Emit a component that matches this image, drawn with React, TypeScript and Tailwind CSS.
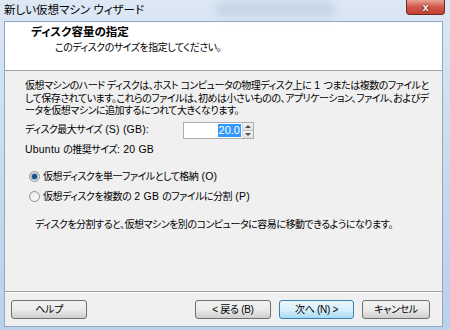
const jp = "font-['Liberation_Sans','Noto_Sans_CJK_JP',sans-serif] [font-feature-settings:'palt']";

// latin runs keep normal spacing, the kana is squeezed like Meiryo UI
function L({ children }: { children: React.ReactNode }) {
  return <span className="text-[10.5px] tracking-[0.2px]">{children}</span>;
}

function WinButton({ children, primary, className }: { children: React.ReactNode; primary?: boolean; className?: string }) {
  return (
    <button
      className={`h-[19px] rounded-[3px] border text-[10px] tracking-[-0.3px] leading-none text-black ${
        primary
          ? "border-[#3c7fb1] bg-gradient-to-b from-[#eaf6fd] via-[#d9f0fc] to-[#a7d9f5]"
          : "border-[#707070] bg-gradient-to-b from-[#f2f2f2] via-[#ebebeb] to-[#cfcfcf]"
      } ${className ?? ""}`}
    >
      {children}
    </button>
  );
}

function Radio({ checked, children }: { checked?: boolean; children: React.ReactNode }) {
  return (
    <div className="flex items-center h-[20px]">
      <div className="shrink-0 w-[11px] h-[11px] rounded-full border border-[#8e8f8f] bg-gradient-to-br from-[#e6e6e6] to-[#fbfbfb] flex items-center justify-center mr-[3px]">
        {checked && <div className="w-[5px] h-[5px] rounded-full bg-[#1a4c7c] shadow-[0_0_1px_1px_#6fa3d6]" />}
      </div>
      <span className="whitespace-nowrap">{children}</span>
    </div>
  );
}

export default function App() {
  return (
    <div className={`w-[450px] h-[330px] flex flex-col bg-gradient-to-b from-[#dce8f4] via-[#c8dbee] to-[#b9d1ea] ${jp} text-black overflow-hidden`}>
      {/* Title bar */}
      <div className="h-[21px] shrink-0 flex items-start relative">
        <span className="pl-[4px] pt-[3px] text-[11.5px] leading-[14px] text-black">新しい仮想マシン ウィザード</span>
        <div className="absolute left-[215px] top-[2px] w-[120px] h-[14px] rounded-full bg-[#9fb8d2]/40 blur-[4px]" />
        <div className="absolute right-[5px] top-0 w-[39px] h-[15px] rounded-b-[4px] border border-t-0 border-[#6d2a24] bg-gradient-to-b from-[#e8a394] via-[#d0574a] to-[#c3402f] flex items-center justify-center">
          <span className="text-white text-[11px] font-bold leading-none font-['Liberation_Sans',sans-serif] [text-shadow:0_0_2px_#000]">x</span>
        </div>
      </div>

      {/* Client area */}
      <div className="flex-1 ml-[4px] mr-[7px] mb-[3px] flex flex-col border border-[#8fa8c4] bg-[#f0f0f0]">
        {/* Header */}
        <div className="h-[49px] shrink-0 bg-white border-b border-[#a0a0a0] pl-[26px] pt-[2px]">
          <div className="text-[11.5px] font-bold leading-[16px]">ディスク容量の指定</div>
          <div className="text-[10px] leading-[16px] pl-[24px] tracking-[-0.5px]">このディスクのサイズを指定してください。</div>
        </div>

        {/* Body */}
        <div className="flex-1 pl-[20px] pt-[8px] text-[10px] leading-[12.5px] tracking-[-0.5px]">
          <div className="whitespace-nowrap">仮想マシンのハード ディスクは、ホスト コンピュータの物理ディスク上に<L> 1 </L>つまたは複数のファイルと</div>
          <div className="whitespace-nowrap">して保存されています。これらのファイルは、初めは小さいものの、アプリケーション、ファイル、およびデ</div>
          <div className="whitespace-nowrap">ータを仮想マシンに追加するにつれて大きくなります。</div>

          <div className="flex items-center mt-[4px] h-[17px]">
            <span className="shrink-0 w-[158px] whitespace-nowrap">ディスク最大サイズ<L> (S) (GB):</L></span>
            <div className="shrink-0 flex h-[17px] border border-[#abadb3] bg-white">
              <div className="w-[58px] flex items-center justify-end pr-[1px]">
                <span className="bg-[#3399ff] text-white px-[1px] text-[11px] tracking-normal leading-[13px]">20.0</span>
              </div>
              <div className="w-[11px] flex flex-col border-l border-[#d6d6d6]">
                <div className="flex-1 flex items-center justify-center bg-gradient-to-b from-[#f4f4f4] to-[#dedede] border-b border-[#c4c4c4]">
                  <div className="w-0 h-0 border-l-[3px] border-r-[3px] border-b-[3px] border-l-transparent border-r-transparent border-b-[#4d4d4d]" />
                </div>
                <div className="flex-1 flex items-center justify-center bg-gradient-to-b from-[#f4f4f4] to-[#dedede]">
                  <div className="w-0 h-0 border-l-[3px] border-r-[3px] border-t-[3px] border-l-transparent border-r-transparent border-t-[#4d4d4d]" />
                </div>
              </div>
            </div>
          </div>

          <div className="mt-[4px] h-[14px] whitespace-nowrap"><L>Ubuntu </L>の推奨サイズ<L>: 20 GB</L></div>

          <div className="mt-[10px] pl-[4px]">
            <Radio checked>仮想ディスクを単一ファイルとして格納<L> (O)</L></Radio>
            <Radio>仮想ディスクを複数の<L> 2 GB </L>のファイルに分割<L> (P)</L></Radio>
          </div>

          <div className="mt-[12px] pl-[10px] whitespace-nowrap">ディスクを分割すると、仮想マシンを別のコンピュータに容易に移動できるようになります。</div>
        </div>

        {/* Footer */}
        <div className="h-[35px] shrink-0 border-t border-[#a0a0a0] shadow-[inset_0_1px_0_#ffffff] flex items-start pt-[8px] pl-[6px] pr-[12px]">
          <WinButton className="w-[76px]">ヘルプ</WinButton>
          <div className="flex-1" />
          <WinButton className="w-[76px]">&lt; 戻る (B)</WinButton>
          <WinButton primary className="w-[75px] ml-[8px]">次へ (N) &gt;</WinButton>
          <WinButton className="w-[68px] ml-[8px]">キャンセル</WinButton>
        </div>
      </div>
    </div>
  );
}
